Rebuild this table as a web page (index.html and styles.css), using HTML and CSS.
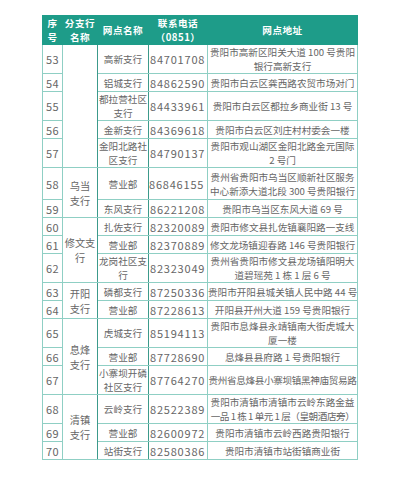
FILE: index.html
```html
<!DOCTYPE html>
<html lang="zh">
<head>
<meta charset="utf-8">
<link rel="stylesheet" href="styles.css">
</head>
<body>
<table class="tbl">
  <colgroup>
    <col class="c-no"><col class="c-br"><col class="c-name"><col class="c-tel"><col class="c-addr">
  </colgroup>
  <thead>
    <tr>
      <th>序<br>号</th>
      <th>分支行<br>名称</th>
      <th>网点名称</th>
      <th>联系电话<br>（0851）</th>
      <th>网点地址</th>
    </tr>
  </thead>
  <tbody>
    <tr><td class="no">53</td><td class="br" rowspan="5"></td><td class="nm">高新支行</td><td class="tel">84701708</td><td class="ad">贵阳市高新区阳关大道 100 号贵阳<br>银行高新支行</td></tr>
    <tr><td class="no">54</td><td class="nm">铝城支行</td><td class="tel">84862590</td><td class="ad">贵阳市白云区龚西路农贸市场对门</td></tr>
    <tr><td class="no">55</td><td class="nm">都拉营社区<br>支行</td><td class="tel">84433961</td><td class="ad">贵阳市白云区都拉乡商业街 13 号</td></tr>
    <tr><td class="no">56</td><td class="nm">金新支行</td><td class="tel">84369618</td><td class="ad">贵阳市白云区刘庄村村委会一楼</td></tr>
    <tr><td class="no">57</td><td class="nm">金阳北路社<br>区支行</td><td class="tel">84790137</td><td class="ad">贵阳市观山湖区金阳北路金元国际<br>2 号门</td></tr>
    <tr class="tall"><td class="no">58</td><td class="br" rowspan="2">乌当<br>支行</td><td class="nm">营业部</td><td class="tel">86846155</td><td class="ad">贵州省贵阳市乌当区顺新社区服务<br>中心新添大道北段 300 号贵阳银行</td></tr>
    <tr><td class="no">59</td><td class="nm">东风支行</td><td class="tel">86221208</td><td class="ad">贵阳市乌当区东风大道 69 号</td></tr>
    <tr><td class="no">60</td><td class="br" rowspan="3">修文支<br>行</td><td class="nm">扎佐支行</td><td class="tel">82320089</td><td class="ad">贵阳市修文县扎佐镇襄阳路一支线</td></tr>
    <tr><td class="no">61</td><td class="nm">营业部</td><td class="tel">82370889</td><td class="ad">修文龙场镇迎春路 146 号贵阳银行</td></tr>
    <tr><td class="no">62</td><td class="nm">龙岗社区支<br>行</td><td class="tel">82323049</td><td class="ad">贵州省贵阳市修文县龙场镇阳明大<br>道碧瑶苑 1 栋 1 层 6 号</td></tr>
    <tr><td class="no">63</td><td class="br" rowspan="2">开阳<br>支行</td><td class="nm">磷都支行</td><td class="tel">87250336</td><td class="ad">贵阳市开阳县城关镇人民中路 44 号</td></tr>
    <tr><td class="no">64</td><td class="nm">营业部</td><td class="tel">87228613</td><td class="ad">开阳县开州大道 159 号贵阳银行</td></tr>
    <tr><td class="no">65</td><td class="br" rowspan="3">息烽<br>支行</td><td class="nm">虎城支行</td><td class="tel">85194113</td><td class="ad">贵阳市息烽县永靖镇南大街虎城大<br>厦一楼</td></tr>
    <tr><td class="no">66</td><td class="nm">营业部</td><td class="tel">87728690</td><td class="ad">息烽县县府路 1 号贵阳银行</td></tr>
    <tr><td class="no">67</td><td class="nm">小寨坝开磷<br>社区支行</td><td class="tel">87764270</td><td class="ad tight">贵州省息烽县小寨坝镇黑神庙贸易路</td></tr>
    <tr><td class="no">68</td><td class="br" rowspan="3">清镇<br>支行</td><td class="nm">云岭支行</td><td class="tel">82522389</td><td class="ad">贵阳市清镇市清镇市云岭东路金益<br><span class="squeeze">一品 1 栋 1 单元 1 层（皇朝酒店旁）</span></td></tr>
    <tr><td class="no">69</td><td class="nm">营业部</td><td class="tel">82600972</td><td class="ad">贵阳市清镇市云岭西路贵阳银行</td></tr>
    <tr><td class="no">70</td><td class="nm">站街支行</td><td class="tel">82580386</td><td class="ad">贵阳市清镇市站街镇商业街</td></tr>
  </tbody>
</table>
</body>
</html>
```

FILE: styles.css
```css
html, body {
  margin: 0;
  padding: 0;
  background: #ffffff;
}

body {
  font-family: "Noto Sans CJK SC", "Noto Sans", sans-serif;
  color: #666666;
}

.tbl {
  margin: 15px 0 0 42px;
  border-collapse: collapse;
  table-layout: fixed;
  width: 315px;
  border: 1px solid #5fb5a7;
}

.c-no { width: 20px; }
.c-br { width: 35px; }
.c-name { width: 51px; }
.c-tel { width: 59px; }
.c-addr { width: 150px; }

.tbl th {
  background: #1e9c89;
  color: #ffffff;
  font-size: 9.6px;
  font-weight: 700;
  line-height: 14px;
  height: 28px;
  padding: 0;
  text-align: center;
  vertical-align: middle;
  border: 1px solid #1e9c89;
  letter-spacing: 0.5px;
}

.tbl td {
  border: 1px solid #8fcfc4;
  padding: 0;
  height: 17px;
  line-height: 14px;
  font-size: 9.6px;
  text-align: center;
  vertical-align: middle;
  white-space: nowrap;
  overflow: hidden;
}

.tbl .no {
  font-size: 11px;
  letter-spacing: 0.3px;
}

.tbl .br {
  border-left-color: #8fcfc4;
  border-right-color: #3c9a8b;
  font-size: 10.2px;
  line-height: 15px;
}

.tbl .nm {
  border-left-color: #3c9a8b;
  border-right-color: #3c9a8b;
  font-size: 9.6px;
}

.tbl .tel {
  font-size: 11px;
  letter-spacing: 0.8px;
  text-align: left;
  padding-left: 1px;
}

.tbl .ad {
  font-size: 9.6px;
}

.tbl .ad.tight {
  letter-spacing: -0.35px;
}

.tbl .squeeze {
  letter-spacing: -0.45px;
}

.tbl tr.tall td {
  padding: 1.5px 0;
}
```
